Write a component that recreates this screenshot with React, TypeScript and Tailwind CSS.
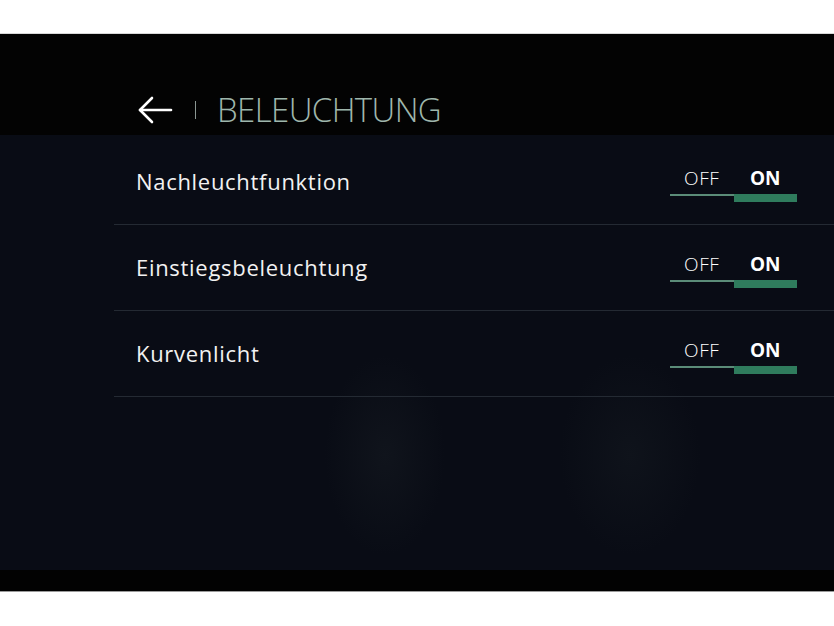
import React from 'react';

type Setting = { label: string; on: boolean };

const settings: Setting[] = [
  { label: 'Nachleuchtfunktion', on: true },
  { label: 'Einstiegsbeleuchtung', on: true },
  { label: 'Kurvenlicht', on: true },
];

const BackArrow: React.FC = () => (
  <svg width="35" height="28" viewBox="0 0 35 28" fill="none" stroke="white" strokeWidth="2.6" strokeLinecap="round" strokeLinejoin="round">
    <path d="M2 14 H33" />
    <path d="M14 2 L2 14 L14 26" />
  </svg>
);

const OnOffToggle: React.FC<{ on: boolean }> = ({ on }) => (
  <div className="flex flex-col w-[127px] mt-[6px]">
    <div className="flex text-[19px] leading-[22px] text-white">
      <span className={`w-1/2 text-center tracking-[0.6px] ${on ? 'font-light' : 'font-bold'}`}>OFF</span>
      <span className={`w-1/2 text-center ${on ? 'font-bold' : 'font-light'}`}>ON</span>
    </div>
    <div className="flex items-start mt-[5px] h-[8px]">
      <div className={`w-1/2 ${on ? 'h-[1.5px] bg-[#5b8c78]' : 'h-[8px] bg-[#2f7c5d]'}`} />
      <div className={`w-1/2 ${on ? 'h-[8px] bg-[#2f7c5d]' : 'h-[1.5px] bg-[#5b8c78]'}`} />
    </div>
  </div>
);

const SettingRow: React.FC<{ setting: Setting }> = ({ setting }) => (
  <div className="h-[86px] flex items-center justify-between border-b border-[#242a33] pl-[22px] pr-[37px]">
    <span className="text-[22px] text-[#f2f2f2] tracking-[0.7px]">{setting.label}</span>
    <OnOffToggle on={setting.on} />
  </div>
);

export default function App() {
  return (
    <div className="w-[834px] h-[626px] bg-white flex flex-col overflow-hidden" style={{ fontFamily: '"Open Sans", "Noto Sans", sans-serif' }}>
      <div className="h-[34px] bg-white border-b border-[#d8d8d8]" />
      <div className="flex-1 flex flex-col bg-black">
        <header className="h-[101px] bg-[#030303] flex items-center pl-[138px] pt-[50px]">
          <BackArrow />
          <span className="ml-[22px] w-[1px] h-[18px] bg-[#8a9692]" />
          <h1 className="ml-[21px] text-[33px] font-extralight text-[#9fb6ac] tracking-[-0.6px] leading-none">BELEUCHTUNG</h1>
        </header>
        <main className="h-[435px] bg-[#090c15] bg-[radial-gradient(ellipse_60px_100px_at_385px_320px,#10141c_0%,transparent_100%),radial-gradient(ellipse_70px_100px_at_630px_320px,#0f131b_0%,transparent_100%)] pt-[4px] pl-[114px]">
          {settings.map((s) => (
            <SettingRow key={s.label} setting={s} />
          ))}
        </main>
        <div className="h-[20px] bg-[#020202]" />
      </div>
      <div className="h-[35px] bg-white border-t border-[#9a9a9a]" />
    </div>
  );
}
